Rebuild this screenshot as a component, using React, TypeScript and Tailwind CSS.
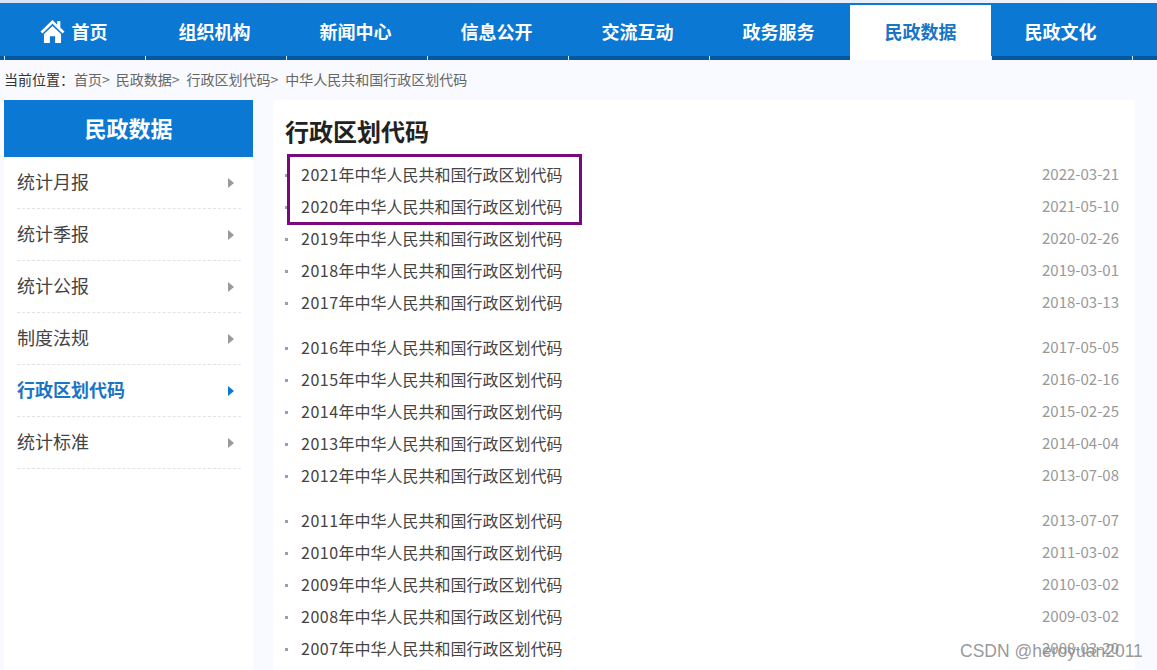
import React from "react";

const nav = ["首页", "组织机构", "新闻中心", "信息公开", "交流互动", "政务服务", "民政数据", "民政文化"];
const side = ["统计月报", "统计季报", "统计公报", "制度法规", "行政区划代码", "统计标准"];
const groups: [string, string][][] = [
  [["2021", "2022-03-21"], ["2020", "2021-05-10"], ["2019", "2020-02-26"], ["2018", "2019-03-01"], ["2017", "2018-03-13"]],
  [["2016", "2017-05-05"], ["2015", "2016-02-16"], ["2014", "2015-02-25"], ["2013", "2014-04-04"], ["2012", "2013-07-08"]],
  [["2011", "2013-07-07"], ["2010", "2011-03-02"], ["2009", "2010-03-02"], ["2008", "2009-03-02"], ["2007", "2008-03-20"]],
];

function Home() {
  return (
    <svg viewBox="0 0 24 24" className="w-[25px] h-[25px] mr-[7px]" fill="#fff">
      <path d="M12 1 L0.5 12 L2.3 13.8 L12 4.6 L21.7 13.8 L23.5 12 L19.5 8.2 V2 H16.5 V5.4 Z" />
      <path d="M12 6.6 L3.8 14.4 V23 H9.5 V16.5 H14.5 V23 H20.2 V14.4 Z" />
    </svg>
  );
}

function Arrow({ active }: { active?: boolean }) {
  return (
    <svg viewBox="0 0 6 10" className="w-[6px] h-[10px] mt-[2px]" fill={active ? "#0b78d3" : "#9a9a9a"}>
      <path d="M0 0 L6 5 L0 10 Z" />
    </svg>
  );
}

export default function App() {
  return (
    <div
      className="relative w-[1157px] h-[670px] overflow-hidden bg-[#f8faff] text-[#333]"
      style={{ fontFamily: '"Noto Sans CJK SC", "Noto Sans", sans-serif' }}
    >
      <div className="h-[3px] bg-linear-to-r from-[#d8e3f5] to-[#f0f4fb]" />
      <nav className="flex h-[57px] bg-[#0b78d3]">
        <div className="w-[4px] flex flex-col justify-end">
          <div className="h-[4px] bg-[#05579f]" />
        </div>
        {nav.map((n, i) => {
          const active = n === "民政数据";
          return active ? (
            <div
              key={n}
              className="w-[141px] mt-[2px] flex items-center justify-center bg-white text-[#1a75c4] text-[18px] font-bold pb-[2px]"
            >
              {n}
            </div>
          ) : (
            <div key={n} className="w-[141px] flex flex-col">
              <div className="flex-1 flex items-center justify-center text-white text-[18px] font-bold pt-[4px] pr-[2px]">
                {i === 0 && <Home />}
                {n}
              </div>
              <div className="h-[4px] bg-[#05579f] border-l border-[#dce9f5]" />
            </div>
          );
        })}
        <div className="flex-1 flex flex-col justify-end">
          <div className="h-[4px] bg-[#05579f] border-l border-[#dce9f5]" />
        </div>
      </nav>

      <div className="h-[40px] pl-[4px] pb-[2px] flex items-center text-[14px] text-[#666]">
        <span className="text-[#333]">当前位置：</span>
        <span>首页&gt;</span>
        <span className="ml-[6px]">民政数据&gt;</span>
        <span className="ml-[7px]">行政区划代码&gt;</span>
        <span className="ml-[7px]">中华人民共和国行政区划代码</span>
      </div>

      <div className="flex pl-[4px]">
        <aside className="w-[249px] h-[570px] bg-white shrink-0">
          <div className="h-[57px] bg-[#0b78d3] text-white text-[22px] font-bold flex items-center justify-center pb-[2px]">
            民政数据
          </div>
          <ul className="pl-[13px] pr-[12px]">
            {side.map((s) => {
              const active = s === "行政区划代码";
              return (
                <li
                  key={s}
                  className={
                    active
                      ? "h-[52px] pb-[2px] flex items-center justify-between pr-[7px] border-b border-dashed border-[#dfe3ea] text-[18px] font-bold text-[#1a75c4]"
                      : "h-[52px] pb-[2px] flex items-center justify-between pr-[7px] border-b border-dashed border-[#dfe3ea] text-[18px] text-[#444]"
                  }
                >
                  {s}
                  <Arrow active={active} />
                </li>
              );
            })}
          </ul>
        </aside>

        <main className="ml-[20px] w-[862px] h-[570px] bg-white pl-[12px] pr-[16px]">
          <h1 className="h-[59px] pt-[13px] text-[24px] leading-[36px] font-bold text-[#222]">行政区划代码</h1>
          {groups.map((g, gi) => (
            <ul key={gi} className="mb-[13px]">
              {g.map(([y, d]) => (
                <li key={y} className="h-[32px] flex items-center">
                  <span className="w-[3px] h-[3px] bg-[#9a9fb0] shrink-0" />
                  <span className="ml-[13px] text-[16px] text-[#444] flex-1 pb-[2px]">
                    <span className="tracking-[0.5px]">{y}</span>年中华人民共和国行政区划代码
                  </span>
                  <span className="text-[15px] text-[#999] pb-[2px]">{d}</span>
                </li>
              ))}
            </ul>
          ))}
        </main>
      </div>

      <div className="absolute left-[287px] top-[154px] w-[295px] h-[71px] border-[3px] border-[#7a0a7c]" />
      <div
        className="absolute left-[960px] top-[640px] text-[17.5px] leading-[22px] text-[#8c8c8c]/90"
        style={{ fontFamily: '"Liberation Sans", sans-serif' }}
      >
        CSDN @heroyuan2011
      </div>
    </div>
  );
}
